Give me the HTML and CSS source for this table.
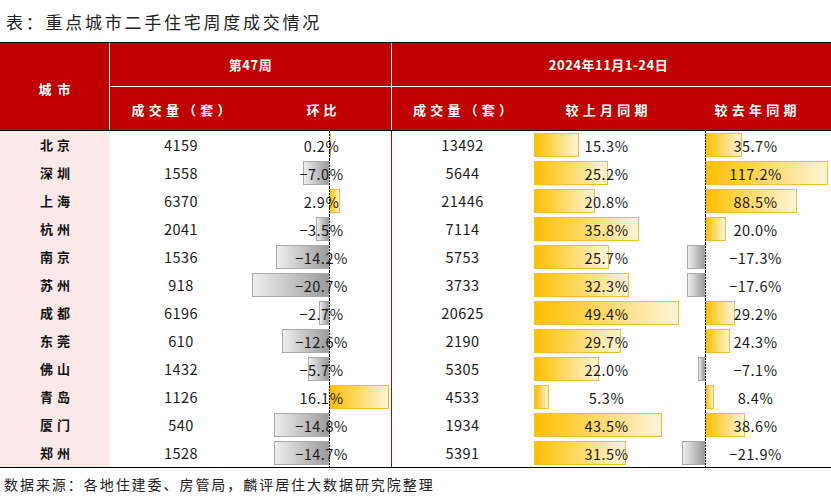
FILE: index.html
```html
<!DOCTYPE html>
<html lang="zh">
<head>
<meta charset="utf-8">
<title>重点城市二手住宅周度成交情况</title>
<link rel="stylesheet" href="styles.css">
</head>
<body>
<div class="title">表：重点城市二手住宅周度成交情况</div>
<div class="thead">
  <div class="th th-city"><span class="wide">城市</span></div>
  <div class="th th-g1">第47周</div>
  <div class="th th-g2">2024年11月1-24日</div>
  <div class="th th-sub"><span class="sp">成交量（套）</span></div>
  <div class="th th-sub sep"><span class="sp">环比</span></div>
  <div class="th th-sub"><span class="sp">成交量（套）</span></div>
  <div class="th th-sub"><span class="sp">较上月同期</span></div>
  <div class="th th-sub"><span class="sp">较去年同期</span></div>
</div>
<div class="tbody">
  <div class="row"><div class="city">北京</div><div class="num">4159</div><div class="bc hb"><i class="axis"></i><b class="bar pos" style="left:77px;width:1px"></b><span class="num">0.2%</span></div><div class="num">13492</div><div class="bc"><b class="bar pos" style="left:1px;width:45px"></b><span class="num">15.3%</span></div><div class="bc yy"><i class="axis"></i><b class="bar pos" style="left:25px;width:37px"></b><span class="num">35.7%</span></div></div>
  <div class="row"><div class="city">深圳</div><div class="num">1558</div><div class="bc hb"><i class="axis"></i><b class="bar neg" style="left:51px;width:26px"></b><span class="num">−7.0%</span></div><div class="num">5644</div><div class="bc"><b class="bar pos" style="left:1px;width:74px"></b><span class="num">25.2%</span></div><div class="bc yy"><i class="axis"></i><b class="bar pos" style="left:25px;width:123px"></b><span class="num">117.2%</span></div></div>
  <div class="row"><div class="city">上海</div><div class="num">6370</div><div class="bc hb"><i class="axis"></i><b class="bar pos" style="left:77px;width:11px"></b><span class="num">2.9%</span></div><div class="num">21446</div><div class="bc"><b class="bar pos" style="left:1px;width:61px"></b><span class="num">20.8%</span></div><div class="bc yy"><i class="axis"></i><b class="bar pos" style="left:25px;width:92px"></b><span class="num">88.5%</span></div></div>
  <div class="row"><div class="city">杭州</div><div class="num">2041</div><div class="bc hb"><i class="axis"></i><b class="bar neg" style="left:64px;width:13px"></b><span class="num">−3.5%</span></div><div class="num">7114</div><div class="bc"><b class="bar pos" style="left:1px;width:105px"></b><span class="num">35.8%</span></div><div class="bc yy"><i class="axis"></i><b class="bar pos" style="left:25px;width:21px"></b><span class="num">20.0%</span></div></div>
  <div class="row"><div class="city">南京</div><div class="num">1536</div><div class="bc hb"><i class="axis"></i><b class="bar neg" style="left:24px;width:53px"></b><span class="num">−14.2%</span></div><div class="num">5753</div><div class="bc"><b class="bar pos" style="left:1px;width:75px"></b><span class="num">25.7%</span></div><div class="bc yy"><i class="axis"></i><b class="bar neg" style="left:7px;width:18px"></b><span class="num">−17.3%</span></div></div>
  <div class="row"><div class="city">苏州</div><div class="num">918</div><div class="bc hb"><i class="axis"></i><b class="bar neg" style="left:0px;width:77px"></b><span class="num">−20.7%</span></div><div class="num">3733</div><div class="bc"><b class="bar pos" style="left:1px;width:95px"></b><span class="num">32.3%</span></div><div class="bc yy"><i class="axis"></i><b class="bar neg" style="left:7px;width:18px"></b><span class="num">−17.6%</span></div></div>
  <div class="row"><div class="city">成都</div><div class="num">6196</div><div class="bc hb"><i class="axis"></i><b class="bar neg" style="left:67px;width:10px"></b><span class="num">−2.7%</span></div><div class="num">20625</div><div class="bc"><b class="bar pos" style="left:1px;width:145px"></b><span class="num">49.4%</span></div><div class="bc yy"><i class="axis"></i><b class="bar pos" style="left:25px;width:30px"></b><span class="num">29.2%</span></div></div>
  <div class="row"><div class="city">东莞</div><div class="num">610</div><div class="bc hb"><i class="axis"></i><b class="bar neg" style="left:30px;width:47px"></b><span class="num">−12.6%</span></div><div class="num">2190</div><div class="bc"><b class="bar pos" style="left:1px;width:87px"></b><span class="num">29.7%</span></div><div class="bc yy"><i class="axis"></i><b class="bar pos" style="left:25px;width:25px"></b><span class="num">24.3%</span></div></div>
  <div class="row"><div class="city">佛山</div><div class="num">1432</div><div class="bc hb"><i class="axis"></i><b class="bar neg" style="left:56px;width:21px"></b><span class="num">−5.7%</span></div><div class="num">5305</div><div class="bc"><b class="bar pos" style="left:1px;width:65px"></b><span class="num">22.0%</span></div><div class="bc yy"><i class="axis"></i><b class="bar neg" style="left:18px;width:7px"></b><span class="num">−7.1%</span></div></div>
  <div class="row"><div class="city">青岛</div><div class="num">1126</div><div class="bc hb"><i class="axis"></i><b class="bar pos" style="left:77px;width:60px"></b><span class="num">16.1%</span></div><div class="num">4533</div><div class="bc"><b class="bar pos" style="left:1px;width:15px"></b><span class="num">5.3%</span></div><div class="bc yy"><i class="axis"></i><b class="bar pos" style="left:25px;width:9px"></b><span class="num">8.4%</span></div></div>
  <div class="row"><div class="city">厦门</div><div class="num">540</div><div class="bc hb"><i class="axis"></i><b class="bar neg" style="left:22px;width:55px"></b><span class="num">−14.8%</span></div><div class="num">1934</div><div class="bc"><b class="bar pos" style="left:1px;width:128px"></b><span class="num">43.5%</span></div><div class="bc yy"><i class="axis"></i><b class="bar pos" style="left:25px;width:40px"></b><span class="num">38.6%</span></div></div>
  <div class="row"><div class="city">郑州</div><div class="num">1528</div><div class="bc hb"><i class="axis"></i><b class="bar neg" style="left:22px;width:55px"></b><span class="num">−14.7%</span></div><div class="num">5391</div><div class="bc"><b class="bar pos" style="left:1px;width:92px"></b><span class="num">31.5%</span></div><div class="bc yy"><i class="axis"></i><b class="bar neg" style="left:2px;width:23px"></b><span class="num">−21.9%</span></div></div>
</div>
<div class="source">数据来源：各地住建委、房管局，麟评居住大数据研究院整理</div>
</body>
</html>
```
FILE: styles.css
```css
* { box-sizing: border-box; }
html, body { margin: 0; padding: 0; background: #fff; }
body {
  width: 831px;
  font-family: "Noto Sans CJK SC", "Noto Sans", sans-serif;
  color: #1a1a1a;
}
.title {
  height: 42px;
  padding: 10px 0 0 6px;
  font-size: 17px;
  line-height: 24px;
  letter-spacing: 2.75px;
  color: #222;
}
.thead, .row {
  display: grid;
  grid-template-columns: 110px 142px 140px 141px 147px 151px;
}
.thead {
  grid-template-rows: 44px 43px;
  background: #c00000;
  border-top: 1px solid #000;
  border-bottom: 1px solid #000;
}
.th {
  display: flex;
  align-items: center;
  justify-content: center;
  color: #fff;
  font-weight: 700;
  font-size: 13px;
}
.th-city { grid-row: 1 / 3; grid-column: 1; border-right: 1px solid #fff; padding-top: 3px; }
.th-g1 { grid-column: 2 / 4; border-right: 1px solid #fff; border-bottom: 1px solid #fff; letter-spacing: 0.5px; }
.th-g2 { grid-column: 4 / 7; border-bottom: 1px solid #fff; letter-spacing: 0.5px; padding-right: 6px; }
.th-sub { padding-top: 2px; }
.sep { border-right: 1px solid #fff; }
.sp { letter-spacing: 4.2px; margin-right: -4.2px; }
.wide { letter-spacing: 6px; margin-right: -6px; }
.tbody { border-bottom: 1px solid #000; }
.row { height: 28px; }
.row > div { height: 28px; line-height: 28px; text-align: center; }
.city {
  background: #fde9e9;
  font-weight: 700;
  font-size: 13px;
  letter-spacing: 4px;
  text-indent: 4px;
  color: #111;
}
.num { font-size: 14.5px; letter-spacing: 0.5px; color: #1a1a1a; }
.bc { position: relative; }
.hb { border-right: 1px solid #8e1414; }
.bar {
  position: absolute;
  top: 2px;
  height: 24px;
}
.bar.pos {
  background: linear-gradient(to right, #ffc000, #fff4d8);
  border: 1px solid #f2bd34;
}
.bar.neg {
  background: linear-gradient(to right, #eeeeee, #9c9c9c);
  border: 1px solid #a8a8a8;
}
.bc .num { position: relative; z-index: 2; }
.axis {
  position: absolute;
  top: 0;
  bottom: 0;
  width: 1px;
  z-index: 3;
  background: repeating-linear-gradient(to bottom, #000 0 2px, transparent 2px 3px);
}
.hb .axis { left: 77px; }
.yy .axis { left: 25px; }
.source {
  padding: 6px 0 0 4px;
  font-size: 14px;
  line-height: 20px;
  letter-spacing: 1.95px;
  color: #222;
}
```
